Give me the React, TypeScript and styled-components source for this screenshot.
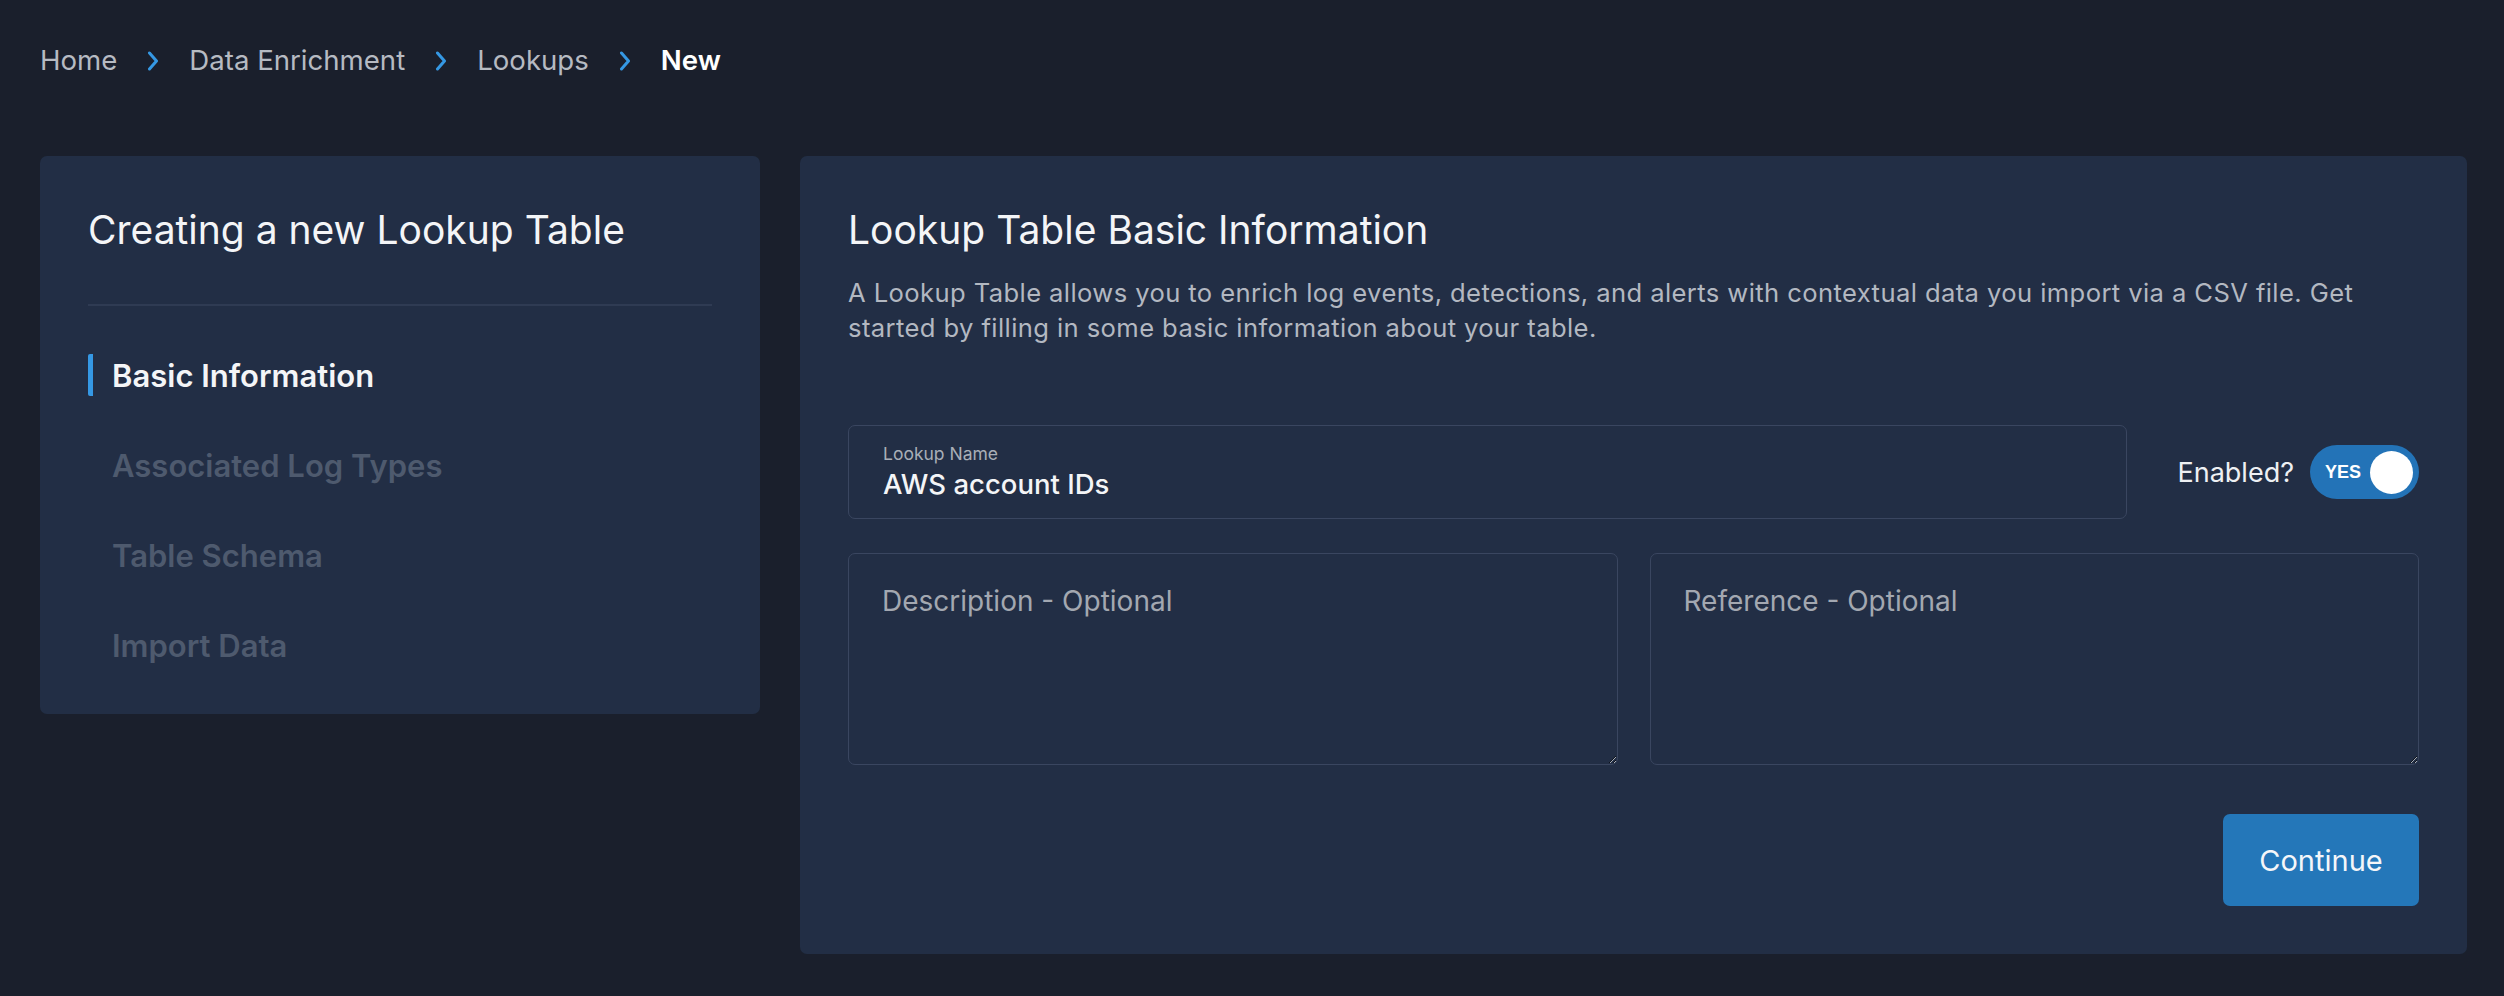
import React from "react";
import styled, { createGlobalStyle } from "styled-components";

const GlobalStyle = createGlobalStyle`
  html, body {
    margin: 0;
    padding: 0;
    background: #1a1f2c;
    font-family: Inter, "Noto Sans", "Liberation Sans", sans-serif;
    color: #f2f3f5;
  }
  * { box-sizing: border-box; }
`;

const Page = styled.div`
  min-height: 996px;
  padding: 0 37px 40px 40px;
  background: #1a1f2c;
`;

const Breadcrumbs = styled.nav`
  display: flex;
  align-items: center;
  height: 122px;
  gap: 30px;
  font-size: 27.6px;
  line-height: 1;
`;

const Crumb = styled.span<{ $current?: boolean }>`
  color: ${(p) => (p.$current ? "#ffffff" : "#b6bac2")};
  font-weight: ${(p) => (p.$current ? 600 : 400)};
`;

const Chevron = styled.svg`
  width: 12px;
  height: 20px;
  flex: none;
`;

const Columns = styled.main`
  display: flex;
  align-items: flex-start;
  gap: 40px;
  margin-top: 34px;
`;

const Card = styled.section`
  background: #222e45;
  border-radius: 7px;
  padding: 48px;
`;

const SideCard = styled(Card)`
  width: 720px;
  flex: none;
`;

const MainCard = styled(Card)`
  flex: 1;
`;

const Title = styled.h1`
  margin: 0;
  font-size: 39px;
  font-weight: 400;
  line-height: 52px;
  color: #f4f5f7;
`;

const Divider = styled.hr`
  border: none;
  height: 2px;
  background: #2f3b53;
  margin: 48px 0 48px;
`;

const StepList = styled.ol`
  list-style: none;
  margin: 0;
  padding: 0;
  display: flex;
  flex-direction: column;
  gap: 48px;
`;

const Step = styled.li<{ $active?: boolean }>`
  display: flex;
  align-items: center;
  height: 42px;
  padding-left: 19px;
  border-left: 5px solid ${(p) => (p.$active ? "#3598e4" : "transparent")};
  border-radius: 2px;
  font-size: 31px;
  font-weight: 600;
  color: ${(p) => (p.$active ? "#f4f5f7" : "#4e5a6e")};
`;

const Intro = styled.p`
  margin: 19px 0 0;
  font-size: 25.6px;
  letter-spacing: 0.4px;
  line-height: 35px;
  color: #b3b8c1;
`;

const Form = styled.form`
  margin-top: 80px;
  display: flex;
  flex-direction: column;
`;

const NameRow = styled.div`
  display: flex;
  align-items: center;
  gap: 51px;
`;

const Field = styled.label`
  flex: 1;
  display: flex;
  flex-direction: column;
  justify-content: center;
  height: 94px;
  padding: 0 34px;
  border: 1.5px solid #3a4660;
  border-radius: 7px;
`;

const FieldLabel = styled.span`
  font-size: 17.5px;
  line-height: 22px;
  color: #a9aeb7;
`;

const FieldInput = styled.input`
  background: transparent;
  border: none;
  outline: none;
  padding: 0;
  margin: 1px 0 0;
  font-family: inherit;
  font-size: 27.5px;
  font-weight: 500;
  line-height: 36px;
  color: #f4f5f7;
`;

const ToggleGroup = styled.div`
  display: flex;
  align-items: center;
  gap: 16px;
`;

const ToggleLabel = styled.span`
  font-size: 27px;
  color: #eef0f3;
`;

const Toggle = styled.button`
  display: flex;
  align-items: center;
  justify-content: space-between;
  width: 109px;
  height: 54px;
  padding: 0 6px 0 15px;
  border: none;
  border-radius: 27px;
  background: #2373b7;
  cursor: pointer;
`;

const ToggleText = styled.span`
  font-family: inherit;
  font-size: 18px;
  font-weight: 700;
  color: #ffffff;
`;

const Knob = styled.span`
  width: 43px;
  height: 43px;
  border-radius: 50%;
  background: #ffffff;
`;

const AreaRow = styled.div`
  display: grid;
  grid-template-columns: 1fr 1fr;
  gap: 32px;
  margin-top: 34px;
`;

const TextArea = styled.textarea`
  height: 212px;
  padding: 27px 33px;
  background: transparent;
  border: 1.5px solid #3a4660;
  border-radius: 7px;
  font-family: inherit;
  font-size: 28px;
  line-height: 40px;
  color: #f4f5f7;
  outline: none;
  resize: both;
  &::placeholder {
    color: #a3a8b1;
  }
`;

const Actions = styled.div`
  display: flex;
  justify-content: flex-end;
  margin-top: 49px;
`;

const PrimaryButton = styled.button`
  width: 196px;
  height: 92px;
  border: none;
  border-radius: 7px;
  background: #2477b9;
  font-family: inherit;
  font-size: 29px;
  color: #f4f6f9;
  cursor: pointer;
`;

const ChevronIcon = () => (
  <Chevron viewBox="0 0 12 20" fill="none">
    <polyline
      points="2.5,2 9.5,10 2.5,18"
      stroke="#3598e4"
      strokeWidth="3"
      strokeLinecap="round"
      strokeLinejoin="round"
    />
  </Chevron>
);

const steps = ["Basic Information", "Associated Log Types", "Table Schema", "Import Data"];

export default function App() {
  return (
    <>
      <GlobalStyle />
      <Page>
        <Breadcrumbs>
          <Crumb>Home</Crumb>
          <ChevronIcon />
          <Crumb>Data Enrichment</Crumb>
          <ChevronIcon />
          <Crumb>Lookups</Crumb>
          <ChevronIcon />
          <Crumb $current>New</Crumb>
        </Breadcrumbs>
        <Columns>
          <SideCard>
            <Title>Creating a new Lookup Table</Title>
            <Divider />
            <StepList>
              {steps.map((s, i) => (
                <Step key={s} $active={i === 0}>
                  {s}
                </Step>
              ))}
            </StepList>
          </SideCard>
          <MainCard>
            <Title>Lookup Table Basic Information</Title>
            <Intro>
              A Lookup Table allows you to enrich log events, detections, and alerts with contextual data you import via a CSV file. Get
              <br />
              started by filling in some basic information about your table.
            </Intro>
            <Form onSubmit={(e) => e.preventDefault()}>
              <NameRow>
                <Field>
                  <FieldLabel>Lookup Name</FieldLabel>
                  <FieldInput defaultValue="AWS account IDs" />
                </Field>
                <ToggleGroup>
                  <ToggleLabel>Enabled?</ToggleLabel>
                  <Toggle type="button">
                    <ToggleText>YES</ToggleText>
                    <Knob />
                  </Toggle>
                </ToggleGroup>
              </NameRow>
              <AreaRow>
                <TextArea placeholder="Description - Optional" />
                <TextArea placeholder="Reference - Optional" />
              </AreaRow>
              <Actions>
                <PrimaryButton type="submit">Continue</PrimaryButton>
              </Actions>
            </Form>
          </MainCard>
        </Columns>
      </Page>
    </>
  );
}
